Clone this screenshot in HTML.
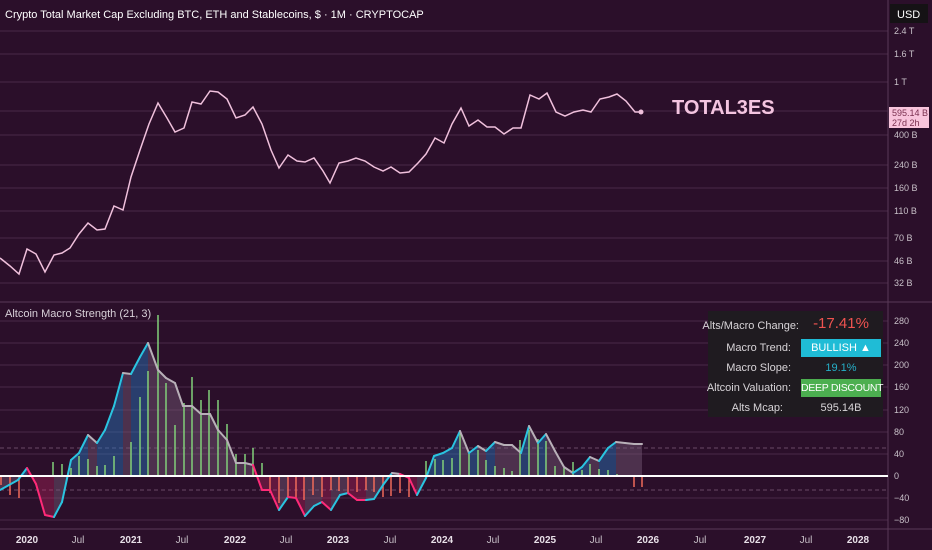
<!DOCTYPE html>
<html><head><meta charset="utf-8"><style>
html,body{margin:0;padding:0;background:#2b0f2a;width:932px;height:550px;overflow:hidden;font-family:"Liberation Sans",sans-serif}
svg{position:absolute;left:0;top:0}
.tbl{position:absolute;left:708px;top:311px;width:175px;height:106px;background:#1f1b20;color:#d8d4d8;font-size:11px}
.r{position:absolute;left:0;width:175px;height:18px}
.l{position:absolute;right:92px;top:3px;white-space:nowrap}
.v{position:absolute;left:93px;width:80px;top:0;height:18px;line-height:18px;text-align:center;white-space:nowrap}
</style></head><body>
<svg width="932" height="550" id="s" xmlns="http://www.w3.org/2000/svg">
<g stroke="#4a2a48" stroke-width="1">
<line x1="0" x2="888" y1="31" y2="31"/><line x1="0" x2="888" y1="54" y2="54"/><line x1="0" x2="888" y1="82" y2="82"/><line x1="0" x2="888" y1="111" y2="111"/><line x1="0" x2="888" y1="135" y2="135"/><line x1="0" x2="888" y1="165" y2="165"/><line x1="0" x2="888" y1="188" y2="188"/><line x1="0" x2="888" y1="211" y2="211"/><line x1="0" x2="888" y1="238" y2="238"/><line x1="0" x2="888" y1="261" y2="261"/><line x1="0" x2="888" y1="283" y2="283"/>
<line x1="0" x2="888" y1="321" y2="321"/><line x1="0" x2="888" y1="343" y2="343"/><line x1="0" x2="888" y1="365" y2="365"/><line x1="0" x2="888" y1="387" y2="387"/><line x1="0" x2="888" y1="410" y2="410"/><line x1="0" x2="888" y1="432" y2="432"/><line x1="0" x2="888" y1="454" y2="454"/><line x1="0" x2="888" y1="498" y2="498"/><line x1="0" x2="888" y1="520" y2="520"/>
</g>
<line x1="0" x2="932" y1="302" y2="302" stroke="#5a3a58"/>
<line x1="0" x2="932" y1="529" y2="529" stroke="#5a3a58"/>
<line x1="888" x2="888" y1="0" y2="550" stroke="#5a3a58"/>
<line x1="0" x2="888" y1="448" y2="448" stroke="#6a4a66" stroke-dasharray="4 3"/>
<line x1="0" x2="888" y1="490" y2="490" stroke="#6a4a66" stroke-dasharray="4 3"/>
<polyline fill="none" stroke="#f0c0dc" stroke-width="1.5" points="0,258 10,266 19,274 27,249 36,254 45,272 54,255 62,253 70,248 79,234 88,223 97,230 105,229 114,206 123,210 131,177 140,150 149,124 158,103 167,118 175,132 184,128 192,102 201,104 210,91 218,92 227,99 236,118 245,115 253,107 262,124 271,150 279,168 288,155 297,161 305,162 314,158 323,171 330,183 339,163 348,161 356,158 365,161 374,167 383,171 391,167 400,173 409,172 418,163 426,154 435,138 444,143 452,124 461,108 469,126 478,120 487,127 495,127 504,134 513,128 521,128 530,95 539,99 547,93 556,112 565,116 574,112 583,110 591,112 600,99 609,97 617,94 626,101 635,112 641,112"/>
<circle cx="641" cy="112" r="2.5" fill="#f0c0dc"/>
<g id="osc"></g>
<line x1="0" x2="888" y1="476" y2="476" stroke="#ffffff" stroke-width="2"/>
<g font-size="11" fill="#ffffff" font-family="Liberation Sans">
<text x="5" y="18">Crypto Total Market Cap Excluding BTC, ETH and Stablecoins, $ · 1M · CRYPTOCAP</text>
<text x="5" y="317" fill="#d8d0d8">Altcoin Macro Strength (21, 3)</text>
</g>
<text x="672" y="114" font-size="20" font-weight="bold" fill="#f4c4e0">TOTAL3ES</text>
<rect x="890" y="4" width="38" height="19" fill="#151215"/>
<text x="897" y="18" font-size="11" fill="#fff">USD</text>
<g font-size="9" fill="#c8c0c8">
<text x="894" y="34">2.4 T</text><text x="894" y="57">1.6 T</text><text x="894" y="85">1 T</text><text x="894" y="138">400 B</text><text x="894" y="168">240 B</text><text x="894" y="191">160 B</text><text x="894" y="214">110 B</text><text x="894" y="241">70 B</text><text x="894" y="264">46 B</text><text x="894" y="286">32 B</text>
<text x="894" y="324">280</text><text x="894" y="346">240</text><text x="894" y="368">200</text><text x="894" y="390">160</text><text x="894" y="413">120</text><text x="894" y="435">80</text><text x="894" y="457">40</text><text x="894" y="479">0</text><text x="894" y="501">−40</text><text x="894" y="523">−80</text>
</g>
<rect x="889" y="107" width="40" height="21" fill="#f8c4dc"/>
<text x="892" y="116" font-size="9" fill="#7a3050">595.14 B</text>
<text x="892" y="126" font-size="9" fill="#7a3050">27d 2h</text>
<g font-size="10" fill="#c8c0c8" text-anchor="middle">
<text x="27" y="543" font-weight="bold" fill="#e8e0e8">2020</text><text x="78" y="543">Jul</text>
<text x="131" y="543" font-weight="bold" fill="#e8e0e8">2021</text><text x="182" y="543">Jul</text>
<text x="235" y="543" font-weight="bold" fill="#e8e0e8">2022</text><text x="286" y="543">Jul</text>
<text x="338" y="543" font-weight="bold" fill="#e8e0e8">2023</text><text x="390" y="543">Jul</text>
<text x="442" y="543" font-weight="bold" fill="#e8e0e8">2024</text><text x="493" y="543">Jul</text>
<text x="545" y="543" font-weight="bold" fill="#e8e0e8">2025</text><text x="596" y="543">Jul</text>
<text x="648" y="543" font-weight="bold" fill="#e8e0e8">2026</text><text x="700" y="543">Jul</text>
<text x="755" y="543" font-weight="bold" fill="#e8e0e8">2027</text><text x="806" y="543">Jul</text>
<text x="858" y="543" font-weight="bold" fill="#e8e0e8">2028</text>
</g>
</svg>
<div class="tbl">
<div class="r" style="top:4px"><span class="l" style="top:5px;right:84px">Alts/Macro Change:</span><span class="v" style="color:#ef5350;font-size:15px">-17.41%</span></div>
<div class="r" style="top:28px"><span class="l">Macro Trend:</span><span class="v" style="background:#1fbcd6;color:#fff">BULLISH ▲</span></div>
<div class="r" style="top:48px"><span class="l">Macro Slope:</span><span class="v" style="color:#26b0c8">19.1%</span></div>
<div class="r" style="top:68px"><span class="l">Altcoin Valuation:</span><span class="v" style="background:#4caf50;color:#fff;font-size:10.5px;letter-spacing:-0.3px">DEEP DISCOUNT</span></div>
<div class="r" style="top:88px"><span class="l" style="right:100px">Alts Mcap:</span><span class="v">595.14B</span></div>
</div>
<script>
var P=[[0,490],[9,485],[18,480],[27,468],[36,484],[45,515],[54,517],[62,502],[71,460],[79,453],[88,435],[97,443],[105,430],[114,406],[123,373],[131,374],[140,357],[148,343],[158,370],[166,378],[175,383],[183,406],[192,406],[201,414],[210,414],[218,430],[227,440],[236,463],[245,463],[253,465],[262,490],[270,490],[279,510],[288,497],[296,498],[305,516],[314,506],[322,502],[331,510],[340,495],[348,493],[357,500],[366,500],[374,499],[383,485],[392,473],[400,474],[409,478],[417,495],[426,478],[434,456],[443,453],[452,448],[460,431],[469,453],[478,446],[486,451],[495,442],[504,445],[512,445],[521,453],[529,426],[538,443],[546,434],[555,451],[564,467],[573,473],[582,467],[590,457],[599,461],[608,448],[616,442],[625,443],[634,444],[642,444]];
var B=[[1,485],[10,495],[19,498],[53,462],[62,464],[71,468],[79,456],[88,459],[97,466],[105,465],[114,456],[123,475],[131,442],[140,397],[148,371],[158,315],[166,383],[175,425],[184,403],[192,377],[201,400],[209,390],[218,400],[227,424],[236,454],[245,454],[253,448],[262,463],[270,493],[279,503],[288,497],[296,497],[304,500],[313,495],[322,497],[331,490],[339,491],[348,493],[357,492],[366,490],[374,492],[383,497],[391,496],[400,493],[409,497],[426,461],[435,459],[443,460],[452,458],[460,431],[469,453],[478,450],[486,460],[495,466],[504,468],[512,471],[520,440],[529,430],[538,439],[546,441],[555,466],[564,468],[573,462],[582,470],[590,464],[599,469],[608,470],[617,474],[634,487],[642,487]];
var g=document.getElementById('osc'),h='',Z=476;
for(var i=0;i<P.length-1;i++){var a=P[i],b=P[i+1];var up=b[1]<a[1],pos=(a[1]+b[1])/2<Z;
var fc=pos?(up?'rgba(40,120,190,0.45)':'rgba(120,90,120,0.45)'):(up?'rgba(120,90,120,0.45)':'rgba(200,40,100,0.35)');
h+='<polygon points="'+a[0]+','+Z+' '+a[0]+','+a[1]+' '+b[0]+','+b[1]+' '+b[0]+','+Z+'" fill="'+fc+'"/>';}
B.forEach(function(q){h+='<line x1="'+q[0]+'" x2="'+q[0]+'" y1="'+Z+'" y2="'+q[1]+'" stroke="'+(q[1]<Z?'#82d07a':'#f06a5a')+'" stroke-width="1.5"/>';});
for(var i=0;i<P.length-1;i++){var a=P[i],b=P[i+1];var up=b[1]<a[1],pos=(a[1]+b[1])/2<Z;
var c=up?'#2ac4e0':(pos?'#b8b0b8':'#ff2a78');
h+='<line x1="'+a[0]+'" y1="'+a[1]+'" x2="'+b[0]+'" y2="'+b[1]+'" stroke="'+c+'" stroke-width="2" stroke-linecap="round"/>';}
g.innerHTML=h;
</script>
</body></html>
